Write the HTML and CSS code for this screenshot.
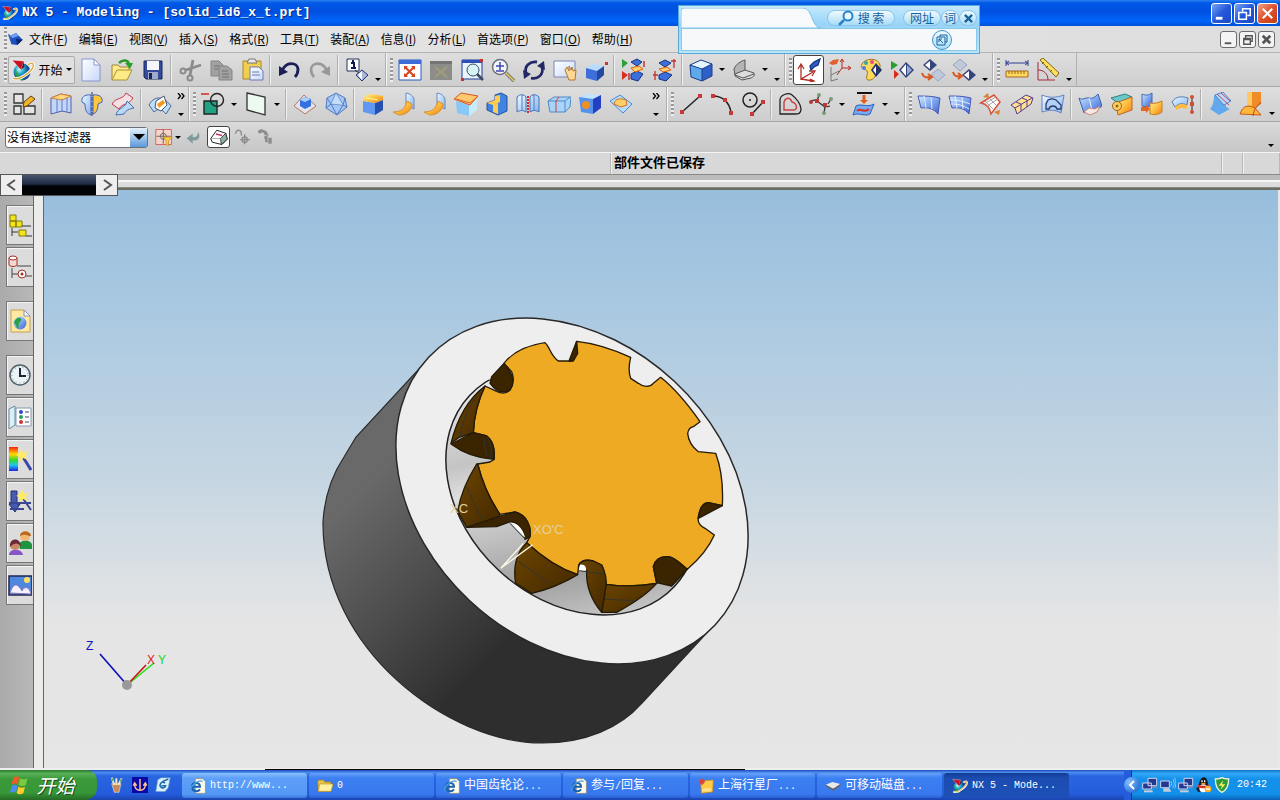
FILE: index.html
```html
<!DOCTYPE html>
<html lang="zh-CN">
<head>
<meta charset="utf-8">
<title>NX 5 - Modeling</title>
<link rel="stylesheet" href="styles.css">
</head>
<body>
<svg class="sprite" aria-hidden="true">
<defs>
<linearGradient id="gb" x1="0" y1="0" x2="1" y2="1"><stop offset="0" stop-color="#d4ecff"/><stop offset=".5" stop-color="#7fa8ee"/><stop offset="1" stop-color="#3a5fd0"/></linearGradient>
<linearGradient id="gl" x1="0" y1="0" x2="1" y2="1"><stop offset="0" stop-color="#eefaff"/><stop offset="1" stop-color="#86b4ec"/></linearGradient>
<linearGradient id="go" x1="0" y1="0" x2="1" y2="1"><stop offset="0" stop-color="#fff0a0"/><stop offset=".5" stop-color="#ffc040"/><stop offset="1" stop-color="#ee7a18"/></linearGradient>
<linearGradient id="gp" x1="0" y1="0" x2="1" y2="1"><stop offset="0" stop-color="#fff"/><stop offset="1" stop-color="#c8d8fa"/></linearGradient>
<linearGradient id="gs" x1="0" y1="0" x2="0" y2="1"><stop offset="0" stop-color="#ff2010"/><stop offset=".3" stop-color="#ffd800"/><stop offset=".55" stop-color="#30d830"/><stop offset=".75" stop-color="#20c8f0"/><stop offset="1" stop-color="#2020e0"/></linearGradient>
<radialGradient id="gg" cx=".35" cy=".35"><stop offset="0" stop-color="#c8f4ff"/><stop offset=".5" stop-color="#28b0c8"/><stop offset="1" stop-color="#104898"/></radialGradient>
</defs>
<symbol id="nx" viewBox="0 0 24 24"><circle cx="11" cy="14" r="8.500" fill="url(#gg)"/><path d="M4 10c2 4 4 10 9 12-6 1-10-4-9-12z" fill="#2ba446"/><path d="M1 2l12 1-3 9z" fill="#c81020" stroke="#fff" stroke-width=".5"/><path d="M13 3l-3 9 3-3z" fill="#700818"/><path d="M2 20c3 2 9 0 14-4s7-8 6-10-4 0-5 1" fill="none" stroke="#fff" stroke-width="3"/><path d="M2 20c3 2 9 0 14-4s7-8 6-10-4 0-5 1" fill="none" stroke="#d8a838" stroke-width="1.400"/></symbol>
<symbol id="part" viewBox="0 0 24 24"><path d="M3 7l9-4 4 4 6 6-8 8-9-1z" fill="#1c4fc0"/><path d="M3 7l9-4 4 4-9 4z" fill="#6fa0f0"/><path d="M12 12l10 1-8 8z" fill="#0c2468"/><path d="M1 5l5 14" stroke="#2458b8" stroke-width="2"/></symbol>
<symbol id="new" viewBox="0 0 24 24"><path d="M3 1h12l6 6v16H3z" fill="url(#gp)" stroke="#8497cf"/><path d="M15 1v6h6z" fill="#fff" stroke="#8497cf"/></symbol>
<symbol id="open" viewBox="0 0 24 24"><path d="M2 22V7h6l2 2h9v5" fill="#ffe98a" stroke="#a08838"/><path d="M2 22l5-10h15l-5 10z" fill="#ffec84" stroke="#a89038"/><path d="M9 5c4-4 9-3 10 1" fill="none" stroke="#2a9a2a" stroke-width="2.500"/><path d="M15 5h8l-3 6z" fill="#28a028"/></symbol>
<symbol id="save" viewBox="0 0 24 24"><path d="M3 3h18v18H5l-2-2z" fill="#354b9c" stroke="#152458"/><path d="M6 3h12v9H6z" fill="#f4f6fb"/><path d="M7 14h10v7H7z" fill="#a0abc8"/><path d="M8 15h3v6H8z" fill="#17255c"/></symbol>
<symbol id="cut" viewBox="0 0 24 24" fill="none" stroke="#8b8b8b" stroke-width="2"><circle cx="5" cy="13" r="2.500"/><circle cx="12" cy="20" r="2.500"/><path d="M8 12l15-5M12 17l3-15" stroke-width="2.800"/></symbol>
<symbol id="copy" viewBox="0 0 24 24" fill="#a2a2a2" stroke="#848484"><path d="M2 3h8l4 4v11H2z"/><path d="M10 8h8l5 4v10H10z"/><path d="M13 13h6M13 16h7M13 19h7M5 8h5M5 11h4" stroke="#707070"/></symbol>
<symbol id="paste" viewBox="0 0 24 24"><path d="M3 3h18v18H3z" fill="#f0ce50" stroke="#a88824"/><path d="M7 5h10l-2-4H9z" fill="#e8e8f0" stroke="#777"/><path d="M10 9h9l4 4v9H10z" fill="url(#gp)" stroke="#6a7cb4"/><path d="M12 14h7M12 17h8" stroke="#6579b8"/></symbol>
<symbol id="undo" viewBox="0 0 24 24"><path d="M5 13C9 3 20 4 21 11c0 3-1 6-3 8" fill="none" stroke="#1b1e58" stroke-width="2.800"/><path d="M2 8v10l9-4z" fill="#1b1e58"/></symbol>
<symbol id="redo" viewBox="0 0 24 24"><path d="M19 13C15 3 4 4 3 11c0 3 1 6 3 8" fill="none" stroke="#989898" stroke-width="2.600"/><path d="M22 8v10l-9-4z" fill="#989898"/></symbol>
<symbol id="info" viewBox="0 0 24 24"><path d="M2 1h12v12H2z" fill="#fff" stroke="#24305c"/><path d="M6 5h3v5M6 10h5M7 3h2" stroke="#111a50" stroke-width="2" fill="none"/><path d="M10 12l5 4" stroke="#222"/><path d="M17 12l6 5-6 6-6-6z" fill="#aab8de" stroke="#27356e"/><path d="M17 13v9l-4-5z" fill="#fff"/></symbol>
<symbol id="fit" viewBox="0 0 24 24"><path d="M1 2h22v20H1z" fill="#fff" stroke="#2b59c0"/><path d="M1 2h22v4H1z" fill="#3b6cd8"/><path d="M7 9l9 9M16 9l-9 9" stroke="#d84420" stroke-width="2"/><path d="M6 8h4l-4 4zM17 8h-4l4 4zM6 19h4l-4-4zM17 19h-4l4-4z" fill="#d84420"/></symbol>
<symbol id="fitgrey" viewBox="0 0 24 24"><path d="M1 3h22v19H1z" fill="#8c8c88"/><path d="M1 3h22v3H1z" fill="#747474"/><path d="M6 9l12 10M18 9L6 19" stroke="#a49c7c" stroke-width="2"/></symbol>
<symbol id="zoomwin" viewBox="0 0 24 24"><path d="M2 2h20v19H2z" fill="#eaf4fc" stroke="#1f3a98"/><path d="M2 2h20v3H2z" fill="#2c50b8"/><circle cx="13" cy="12" r="6" fill="#d8f2f4" stroke="#35506a"/><path d="M17 16l6 6" stroke="#404a60" stroke-width="2.500"/><path d="M1 20h3v3H1zM20 1h3v3h-3z" fill="#c83030"/></symbol>
<symbol id="zoom" viewBox="0 0 24 24"><circle cx="9" cy="9" r="7.500" fill="#f0f4fa" stroke="#6b6f78" stroke-width="1.500"/><path d="M5 8h8M9 4v8M5 13h8" stroke="#4048b0" stroke-width="1.500"/><path d="M15 15l8 8" stroke="#777" stroke-width="3.500"/><path d="M15 15l8 8" stroke="#f0d058" stroke-width="1.500"/></symbol>
<symbol id="rotate" viewBox="0 0 24 24"><path d="M4 15C2 8 8 3 15 4M20 9c2 7-4 13-11 11" fill="none" stroke="#222866" stroke-width="2.800"/><path d="M1 12l8 4-7 5zM23 12l-8-4 7-5z" fill="#222866"/></symbol>
<symbol id="pan" viewBox="0 0 24 24"><path d="M1 3h21v16H1z" fill="url(#gp)" stroke="#7c86b0"/><path d="M12 12l2-3 2 4V8l2 4 1-3 1 4 3-1-1 10h-6z" fill="#ffd898" stroke="#b07830"/></symbol>
<symbol id="persp" viewBox="0 0 24 24"><path d="M2 10l7-4 11 2-7 5z" fill="#b8dcff"/><path d="M2 10l11 3v10L2 20z" fill="#3d6fdc"/><path d="M13 13l7-5v9l-7 6z" fill="#2448a0"/><path d="M21 4h3v3h-3z" fill="#d03030"/></symbol>
<symbol id="clipa" viewBox="0 0 24 24"><path d="M1 1l6 4-6 5z" fill="#2f9f38"/><path d="M1 13l6 4-6 5z" fill="#d83020"/><path d="M10 4l6-3 5 3-5 4zM10 16l6-3 6 3-5 7-7-2z" fill="#3d6fdc" stroke="#17347c"/><path d="M10 10l8-2 4 3-8 3z" fill="#ffd070" stroke="#e06010"/><path d="M23 3v6M8 15v7" stroke="#c83030" stroke-width="1.500"/></symbol>
<symbol id="clipb" viewBox="0 0 24 24"><path d="M7 5l6-3 6 3-6 4zM7 17l6-3 7 3-6 6-7-2z" fill="#3d6fdc" stroke="#17347c"/><path d="M7 11l8-2 4 3-8 2z" fill="#ffd070" stroke="#e06010"/><path d="M22 1v9M19 3h5M3 13v9M1 17h5" stroke="#c83030" stroke-width="1.300"/></symbol>
<symbol id="cube" viewBox="0 0 24 24"><path d="M1 7l11-5 11 4-10 5z" fill="#e6f7ff"/><path d="M1 7l12 4v12L2 19z" fill="#60a8ec"/><path d="M13 11l10-5v12l-10 5z" fill="#2e60c8"/><path d="M1 7l11-5 11 4v12l-10 5L2 19zM1 7l12 4 10-5M13 11v12" fill="none" stroke="#1b3c8c"/></symbol>
<symbol id="grey" viewBox="0 0 24 24" fill="#b4b4b4" stroke="#555"><path d="M2 11c2-5 7-8 11-9v11L3 17z"/><path d="M3 16l10-4 9 3c1 3-1 4-3 5l-9 2-7-4z" fill="#ddd"/><path d="M3 17l8 3 11-4" fill="none"/></symbol>
<symbol id="csysa" viewBox="0 0 24 24" fill="none" stroke="#b03028" stroke-width="1.300"><path d="M4 8v13l12-7M4 21l12 2M1 11l3-5 3 5M12 13l6 0-3 5M13 21l4 2-4 1"/><path d="M13 8l4-4 6-3-2 6-4 2-3 3z" fill="#2f5fc8" stroke="#14347c"/></symbol>
<symbol id="csysb" viewBox="0 0 24 24" fill="none" stroke="#b82820"><path d="M14 2v8l8 0M14 10l-5 7M12 4l2-3 2 3M20 8l3 2-3 2"/><path d="M3 9v14M3 17l8-4M3 23l7-2" stroke="#777"/><path d="M1 5l4-3 6-1-2 5-5 1z" fill="#e06030" stroke="none"/></symbol>
<symbol id="palette" viewBox="0 0 24 24"><path d="M3 6C6 0 19-1 21 7c1 4-4 4-4 8s-4 8-8 7 2-8-2-10-6-1-4-6z" fill="#ffd95c" stroke="#a07820"/><circle cx="7" cy="5" r="2" fill="#30a8a8"/><circle cx="13" cy="4" r="2" fill="#e05080"/><circle cx="5" cy="10" r="2" fill="#5080d8"/><path d="M17 5l6 7-6 7-5-7z" fill="#25326c"/><path d="M17 8v8l-3-4z" fill="#fff"/></symbol>
<symbol id="visa" viewBox="0 0 24 24"><path d="M1 3l7 4-7 5z" fill="#28a030"/><path d="M4 12l5 4-5 5z" fill="#d82818"/><path d="M16 4l8 8-8 8-7-8z" fill="#34457c"/><path d="M16 6v12l-5-6z" fill="#fff"/><path d="M17 7l5 5-5 5z" fill="#96a8d8"/></symbol>
<symbol id="visb" viewBox="0 0 24 24"><path d="M9 1l7 6-7 6-7-6z" fill="#34457c"/><path d="M9 3v8L4 7z" fill="#fff"/><path d="M17 11l7 6-7 6-7-6z" fill="#c0c8dc" stroke="#9aa4c0"/><path d="M1 15c1 4 4 5 8 4M7 16l4 3-4 3" fill="none" stroke="#d85820" stroke-width="2"/></symbol>
<symbol id="visc" viewBox="0 0 24 24"><path d="M8 1l7 6-7 6-7-6z" fill="#c0c8dc" stroke="#9aa4c0"/><path d="M17 11l7 6-7 6-7-6z" fill="#34457c"/><path d="M17 13v8l-5-4z" fill="#fff"/><path d="M1 14c1 4 4 5 7 4M6 15l4 3-4 3" fill="none" stroke="#d85820" stroke-width="2"/></symbol>
<symbol id="ruler" viewBox="0 0 24 24"><path d="M1 5h22M1 2v6M23 2v6M4 3L1 5l3 2M20 3l3 2-3 2" stroke="#303c90" fill="none"/><path d="M1 13h22v6H1z" fill="#ffd860" stroke="#a86820"/><path d="M4 13v3M7 13v3M10 13v3M13 13v3M16 13v3M19 13v3" stroke="#a06010"/></symbol>
<symbol id="angle" viewBox="0 0 24 24"><path d="M2 4v18h17M2 12c6 0 10 4 10 10" fill="none" stroke="#a82838"/><path d="M4 2l3-2 16 15-3 4z" fill="#ffe058" stroke="#786020"/><path d="M8 4l-2 2M12 8l-2 2M16 12l-2 2" stroke="#786020"/></symbol>
<symbol id="sketch" viewBox="0 0 24 24"><path d="M2 2h9v9H2zM2 14h7v8H2zM12 14h11v8H12z" fill="#e4e4e4" stroke="#333" stroke-width="1.300"/><path d="M11 15l1-5 7-6 4 3-8 7z" fill="#f0b428" stroke="#664010"/></symbol>
<symbol id="extr" viewBox="0 0 24 24"><path d="M2 6v16l11-3 9 2V4L12 2z" fill="#c2d6f8" stroke="#5060a8"/><path d="M2 6l10-4 10 2-9 4z" fill="#ffd880" stroke="#d8802c"/><path d="M8 7v13M13 7v13M18 6v14" stroke="#6878c8"/></symbol>
<symbol id="revolve" viewBox="0 0 24 24"><path d="M11 3C4 2 1 6 2 10l3 2c0 6 2 10 6 11z" fill="url(#gl)" stroke="#4460b8"/><path d="M13 3c7-1 10 3 9 7l-4 2c0 6-2 9-5 10z" fill="#ffc83c" stroke="#4460b8"/><path d="M12 0v24" stroke="#223880" stroke-dasharray="4 1"/></symbol>
<symbol id="sweep" viewBox="0 0 24 24"><path d="M1 12C5 5 12 8 15 1l7 5c-4 7-11 5-14 11z" fill="#f4e0e4" stroke="#c03848"/><path d="M5 23c2-8 10-7 11-14l7 7c-5 1-8 2-10 6z" fill="#bcdaf8" stroke="#4070b0"/></symbol>
<symbol id="patch" viewBox="0 0 24 24"><path d="M1 13C5 5 14 2 23 14l-5 8c-4-5-8-6-12-2z" fill="#bedcf8" stroke="#4868a0"/><path d="M8 9l8-5 3 9-6 6-6-3z" fill="#fff" stroke="#456"/><path d="M9 12l6-4 2 3-6 5z" fill="#f09820"/></symbol>
<symbol id="bool" viewBox="0 0 24 24"><path d="M3 9h13v13H3z" fill="#1fa384" stroke="#222" stroke-width="1.400"/><circle cx="16" cy="8" r="6.500" fill="none" stroke="#222" stroke-width="1.400"/><path d="M0 2h8" stroke="#d02828" stroke-width="1.500"/></symbol>
<symbol id="plane" viewBox="0 0 24 24"><path d="M3 1l18 4v18L3 18z" fill="#edfaf0" stroke="#333" stroke-width="1.300"/></symbol>
<symbol id="pyr" viewBox="0 0 24 24"><path d="M1 14L11 3l12 11-11 8z" fill="#dfe4ee" stroke="#b87860"/><path d="M7 8l5-3 6 2v7l-6 3-5-3z" fill="#3470e0"/><path d="M7 8l5-3 6 2-6 3z" fill="#a8d0ff"/></symbol>
<symbol id="poly" viewBox="0 0 24 24"><path d="M12 1l9 5 2 9-10 8L2 16 3 6z" fill="#a4c8f4" stroke="#5478c0"/><path d="M12 1L7 12l6 11 6-10zM3 6l4 6 12 1 2-7M2 16l5-4M23 15l-4-2" fill="none" stroke="#5478c0"/><path d="M12 1L7 12l12 1z" fill="#d8ecff" opacity=".6"/></symbol>
<symbol id="blend" viewBox="0 0 24 24"><path d="M2 9l12 2v12L2 20z" fill="#5e98f0"/><path d="M14 11l8-3v10l-8 5z" fill="#2450b0"/><path d="M2 9c0-5 4-7 8-7l12 2v4l-8 3z" fill="url(#go)"/><path d="M5 6l12 2" stroke="#fff8a0"/></symbol>
<symbol id="curve1" viewBox="0 0 24 24"><path d="M14 1c5 1 7 3 8 6v10c-4-2-6-3-8-3z" fill="url(#gl)" stroke="#6888c0"/><path d="M1 20c8 0 12-3 14-11l5 3c0 6-6 11-13 11z" fill="url(#go)" stroke="#d89028"/></symbol>
<symbol id="chamfer" viewBox="0 0 24 24"><path d="M2 9l13 4v11L3 21z" fill="#88c8f8"/><path d="M15 13l8-9v14l-8 6z" fill="#c8ecfc"/><path d="M0 7l7-6 17 3-8 9z" fill="#ffc870" stroke="#d05820"/><path d="M2 7l14 4 7-6" stroke="#e06020" fill="none"/></symbol>
<symbol id="shell" viewBox="0 0 24 24"><path d="M2 11l8-3V3l6-2 6 3v15l-9 4-11-5z" fill="#3f84e0" stroke="#2850a0"/><path d="M2 11l6 2 7-3V3l-5 1v4zM8 13v7l5 2V11z" fill="#ffcb50"/></symbol>
<symbol id="rib" viewBox="0 0 24 24"><path d="M1 5c3-3 7-3 9 0v15c-3-2-6-2-9 0zM14 5c2-3 6-3 9 0v15c-3-2-6-2-9 0z" fill="url(#gl)" stroke="#4470b8"/><path d="M12 4v18" stroke="#d82828" stroke-width="2" stroke-dasharray="2 1"/><path d="M6 3v16M18 3v16" stroke="#507ac0"/></symbol>
<symbol id="trim" viewBox="0 0 24 24"><path d="M1 9l6-4h17l-1 10-5 5H3z" fill="#a8d4f8" stroke="#5088c8"/><path d="M1 9h17l5-4M18 9v11" fill="none" stroke="#5088c8"/><path d="M12 5l-3 4v11" fill="none" stroke="#d04038"/></symbol>
<symbol id="hole" viewBox="0 0 24 24"><path d="M1 5l8-3 14 1-8 4z" fill="#c0e4ff"/><path d="M1 5l14 2v15L3 20z" fill="#5494ec"/><path d="M15 7l8-4v13l-8 6z" fill="#2340c0"/><circle cx="8" cy="13" r="4" fill="#f09020"/></symbol>
<symbol id="emboss" viewBox="0 0 24 24"><path d="M1 9l10-6 12 9-9 9z" fill="#b8ddf8" stroke="#4888d0"/><path d="M5 12c1-6 7-6 12-4l1 5-6 2z" fill="#ffcf68" stroke="#d07020"/></symbol>
<symbol id="line" viewBox="0 0 24 24"><path d="M3 20L21 4" stroke="#222" stroke-width="1.500"/><path d="M1 18h4v4H1zM19 2h4v4h-4z" fill="#c83838"/></symbol>
<symbol id="arc" viewBox="0 0 24 24"><path d="M3 4c9 0 17 6 18 17" fill="none" stroke="#222" stroke-width="1.500"/><path d="M1 2h4v4H1zM13 6h4v4h-4zM19 19h4v4h-4z" fill="#c83838"/></symbol>
<symbol id="circ" viewBox="0 0 24 24"><circle cx="9" cy="8" r="7" fill="none" stroke="#222" stroke-width="1.500"/><path d="M8 8h2M11 22L22 10" stroke="#222" stroke-width="1.500"/><path d="M9 20h4v4H9zM20 8h4v4h-4z" fill="#c83838"/></symbol>
<symbol id="offset" viewBox="0 0 24 24" fill="none"><path d="M2 22V8c0-5 8-8 12-5s9 9 9 14-3 5-6 5z" stroke="#222" stroke-width="1.300"/><path d="M6 18V10c2-5 6-5 8 0 5 1 6 8 2 8z" stroke="#c84848" stroke-width="1.500"/></symbol>
<symbol id="spline" viewBox="0 0 24 24"><path d="M1 10c7-7 11 8 20 4M8 9l2-6M16 14l-1 8M19 12l3-5" fill="none" stroke="#333" stroke-width="1.300"/><path d="M6 7h4v4H6zM14 11h4v4h-4z" fill="#b83838"/><circle cx="10" cy="3" r="2" fill="#7a9a78"/><circle cx="15" cy="21" r="2" fill="#7a9a78"/><circle cx="22" cy="7" r="2" fill="#7a9a78"/><circle cx="2" cy="10" r="2" fill="#b83838"/></symbol>
<symbol id="proj" viewBox="0 0 24 24"><path d="M5 1h15" stroke="#111" stroke-width="2"/><path d="M12 3v7" stroke="#e06020" stroke-width="3"/><path d="M8 8h8l-4 4z" fill="#e06020"/><path d="M4 14c5-3 11 2 18-2l-4 10c-5 3-11-2-17 1z" fill="#78acf0" stroke="#2860c0"/><path d="M5 19c4-4 7 3 12-2" fill="none" stroke="#d83028" stroke-width="2"/></symbol>
<symbol id="surfa" viewBox="0 0 24 24"><path d="M1 4c7 0 14 0 22 2l-2 16c-4-5-9-7-17-6z" fill="url(#gb)" stroke="#4858b8"/><path d="M7 4l2 12M14 5l1 12" stroke="#dceaff"/></symbol>
<symbol id="surfb" viewBox="0 0 24 24"><path d="M1 4c7 0 14 0 22 2l-2 16c-4-5-9-7-17-6z" fill="url(#gb)" stroke="#4858b8"/><path d="M7 4l2 12M14 5l1 12M2 8c7 0 13 1 20 4M3 12c6 0 12 1 18 5" stroke="#e8f0ff" fill="none"/></symbol>
<symbol id="surfc" viewBox="0 0 24 24"><path d="M2 11L15 3l6 7-9 12c-1-6-4-10-10-11z" fill="#fff" stroke="#d85038" stroke-width="1.500"/><path d="M6 9l9 9M10 6l8 8M8 14L19 7M5 12L17 5" stroke="#a8a0a0"/><path d="M4 5l5-4 1 5zM15 20l6-2-1 5z" fill="#d88030"/></symbol>
<symbol id="surfd" viewBox="0 0 24 24"><path d="M1 13l15-10 7 3-2 6L7 22l-2-6z" fill="#ffe290" stroke="#5b388c"/><path d="M5 16L22 6M6 10l5 2v7M12 6l5 2v7" stroke="#5b388c" fill="none"/></symbol>
<symbol id="surfe" viewBox="0 0 24 24"><path d="M1 3c7 3 14 3 22 0l-3 18c-7-4-12-3-19-1z" fill="url(#gl)" stroke="#6480c8"/><path d="M7 8c4-2 8-1 10 2l3 3v4h-4c-1-4-7-4-8 0H5v-5z" fill="#b4d0f4" stroke="#273e78" stroke-width="1.300"/></symbol>
<symbol id="surff" viewBox="0 0 24 24"><path d="M1 6c4 3 6-1 10 0s6-1 9-4l4 12c-4 4-8 2-11 4s-5 1-7 3z" fill="url(#gb)" stroke="#3c60b0"/><path d="M11 6l3 12" stroke="#e8f4ff"/><path d="M6 20l5-4 6 1 5-3-3 6-7 3z" fill="#f8e8e4" stroke="#c88878"/></symbol>
<symbol id="surfg" viewBox="0 0 24 24"><path d="M2 6l14-4 7 3-14 6z" fill="#6bc8c8" stroke="#308080"/><path d="M7 11l16-6v13l-14 5z" fill="url(#go)" stroke="#b86828"/><circle cx="8" cy="14" r="4.500" fill="#ffcc60" stroke="#986020"/><circle cx="8" cy="14" r="1.500" fill="#887018"/></symbol>
<symbol id="surfh" viewBox="0 0 24 24"><path d="M2 2c4 2 7 1 10-1v12c-3 2-6 2-10 1z" fill="url(#gb)" stroke="#4468b0"/><path d="M10 11c4 1 8 0 12-2v11c-4 3-8 3-12 2z" fill="url(#go)" stroke="#c88028"/><path d="M1 15h5v-2l4 4-4 4v-2H1z" fill="#e06820"/></symbol>
<symbol id="surfi" viewBox="0 0 24 24"><path d="M1 10c4-6 10-6 16-4l-1 7c-5-2-8-2-12 2z" fill="url(#gl)" stroke="#5080b0"/><path d="M4 15c3-3 6-4 12-2v4c-6-2-8-1-11 1z" fill="#ffb840"/><path d="M21 4v17" stroke="#222"/><circle cx="21" cy="5" r="2" fill="#d05030"/><circle cx="21" cy="20" r="2" fill="#d05030"/><path d="M19 10h4v4h-4z" fill="#d05030"/></symbol>
<symbol id="surfj" viewBox="0 0 24 24"><path d="M2 17c3-3 4-8 4-14l12 5c-1 6 0 8 4 9l-11 6z" fill="#62a8ec"/><path d="M7 3l8-3 8 9-7 4z" fill="#b4dcfa" stroke="#6080c8"/><path d="M9 2l12 11M13 1l9 8" stroke="#c84060"/></symbol>
<symbol id="surfk" viewBox="0 0 24 24"><path d="M8 0h14v12l-6 4-8-3z" fill="#f08c28"/><path d="M8 0h5v14l-5-1z" fill="#ffc860"/><path d="M1 22c3-9 8-9 15-6l6 7z" fill="#ffb838" stroke="#c85820"/><path d="M22 10c-4 5-7 6-8 14" fill="none" stroke="#b83c20"/></symbol>
<symbol id="filt" viewBox="0 0 24 24"><path d="M1 2h21v20H1z" fill="#f4d4c8" stroke="#d04848"/><path d="M11 2v19M2 11h19" stroke="#444"/><circle cx="11" cy="11" r="4" fill="none" stroke="#555"/><path d="M11 12h12l-5 5v7l-3-2v-5z" fill="#ffd23c" stroke="#c88820"/></symbol>
<symbol id="back" viewBox="0 0 24 24"><path d="M18 4c6 10-2 14-8 13v5l-9-8 9-7v5c4 1 8-1 8-8z" fill="#7f9a9a"/></symbol>
<symbol id="solid" viewBox="0 0 24 24"><path d="M1 14L9 3l12 4 2 8-7 7-13-3z" fill="#fff" stroke="#222" stroke-width="1.300"/><path d="M15 22l-1-8 7-7 2 8z" fill="#8cb0ac" stroke="#222"/><path d="M1 14l13 0" stroke="#999"/><path d="M8 8l8 2" stroke="#d83070" stroke-width="2"/></symbol>
<symbol id="ga" viewBox="0 0 24 24" fill="none" stroke="#8d8d8d" stroke-width="2"><path d="M2 7c3-8 10-6 9 3M16 8v15M9 16h15"/><circle cx="16" cy="16" r="4"/></symbol>
<symbol id="gbk" viewBox="0 0 24 24" fill="#8d8d8d"><path d="M1 3l5-3 8 3 4 7-6-1-3-4-6 2zM11 10h5v5h-5zM17 13h5v9h-5zM12 15h4v5h-4z"/></symbol>
<symbol id="nav" viewBox="0 0 24 24"><path d="M2 2h6v6H2zM2 8h6v6H2zM8 8h6v6H8z" fill="#f4e418" stroke="#807810"/><path d="M14 13h9M4 15v8M4 19h6M18 23h6" stroke="#333"/><path d="M11 17h7v6h-7z" fill="#f4e418" stroke="#807810"/></symbol>
<symbol id="nav2" viewBox="0 0 24 24"><path d="M1 3v7c2 2 6 2 8 0V3" fill="#f4d8d0" stroke="#a03028"/><ellipse cx="5" cy="3" rx="4" ry="2" fill="#fff" stroke="#a03028"/><path d="M9 11h14M4 13v10M4 19h6M18 21h6" stroke="#444"/><circle cx="14" cy="19" r="4" fill="#fff" stroke="#a03028"/><circle cx="14" cy="19" r="1.500" fill="#a03028"/></symbol>
<symbol id="web" viewBox="0 0 24 24"><path d="M3 1h13l6 6v16H3z" fill="#ffe9a0" stroke="#c8a050"/><path d="M16 1v6h6z" fill="#fff" stroke="#8090b8"/><circle cx="12" cy="14" r="6.500" fill="url(#gb)"/><path d="M8 10c4-3 7 0 4 3s0 5-2 6-1-3-3-4 0-4 1-5z" fill="#28a048"/></symbol>
<symbol id="clock" viewBox="0 0 24 24"><circle cx="12" cy="12" r="10" fill="#eaf4f6" stroke="#51626c" stroke-width="1.500"/><circle cx="12" cy="12" r="8" fill="none" stroke="#7a8c94" stroke-dasharray="1 3"/><path d="M12 5v8h6" fill="none" stroke="#223" stroke-width="2"/></symbol>
<symbol id="roles" viewBox="0 0 24 24"><path d="M8 3h15v18H8z" fill="#fff" stroke="#8898b8"/><path d="M1 4l6-3v19l-6 4z" fill="#d8f0f8" stroke="#708898"/><circle cx="13" cy="7" r="2" fill="#3048d0"/><circle cx="13" cy="12" r="2" fill="#28a058"/><circle cx="13" cy="17" r="2" fill="#d83030"/><path d="M17 7h4M17 12h4M17 17h4" stroke="#445"/></symbol>
<symbol id="spect" viewBox="0 0 24 24"><path d="M1 0h9v24H1z" fill="url(#gs)"/><path d="M15 10l8 13" stroke="#3c48a8" stroke-width="3"/><path d="M13 1l2 5 5-2-3 5 3 4-5-2-3 4v-5l-4-2 4-2z" fill="#ffec60"/></symbol>
<symbol id="wand" viewBox="0 0 24 24"><path d="M3 2h6v13h3l-5 8-6-8h2z" fill="#475bb0" stroke="#26306c"/><path d="M1 14h22M2 20h14M14 8l9 13" stroke="#3a4690" stroke-width="2"/><path d="M14 0l2 5 5-1-4 4 3 4-5-2-3 3v-5l-4-1 4-2z" fill="#ffec60"/></symbol>
<symbol id="people" viewBox="0 0 24 24"><path d="M11 14c1-6 12-6 13 0v4H12z" fill="#1c9440"/><circle cx="17" cy="5" r="5" fill="#f0b870"/><path d="M12 5c0-6 11-6 11 0-3 0-6-3-11 0z" fill="#b86820"/><path d="M1 24c0-7 13-7 14 0z" fill="#8854c8"/><circle cx="7" cy="14" r="5" fill="#c88868"/><path d="M2 16c-1-10 11-10 11 0-2-4-6-5-11 0z" fill="#6c2838"/></symbol>
<symbol id="pic" viewBox="0 0 24 24"><path d="M1 3h23v19H1z" fill="#5088e0" stroke="#222850" stroke-width="1.500"/><path d="M2 20c2-6 4-8 6-8s5 4 6 6c2-5 7-5 9 3z" fill="#f6f0ff" stroke="#8878b8"/><circle cx="19" cy="7" r="3" fill="#ffe060"/></symbol>
<symbol id="winflag" viewBox="0 0 24 24"><path d="M4 3c3-2 5-1 7 0l-2 8c-2-1-4-1-7 0z" fill="#f05a28"/><path d="M12 4c3 1 5 2 9 0l-2 8c-3 2-6 1-9 0z" fill="#7cc840"/><path d="M2 13c3-2 5-1 7 0l-2 8c-2-1-4-1-7 0z" fill="#4a8cf0"/><path d="M10 14c3 1 5 2 8 0l-2 8c-3 2-6 1-8 0z" fill="#ffcc28"/></symbol>
<symbol id="brushes" viewBox="0 0 24 24"><path d="M4 10h14l-3 13H8z" fill="#c88a58" stroke="#fff" stroke-width=".7"/><path d="M8 12L4 1M11 12V2M14 12l5-10" stroke="#f0e8c0" stroke-width="3"/><path d="M4 2l2 4M19 3l-2 4" stroke="#40a050" stroke-width="2"/></symbol>
<symbol id="anchor" viewBox="0 0 24 24"><path d="M0 0h24v24H0z" fill="#0808a8"/><path d="M12 3v17M4 11c0 7 4 9 8 9s8-2 8-9M2 13l2-4 3 4M17 13l3-4 2 4" fill="none" stroke="#ffc090" stroke-width="2.200"/></symbol>
<symbol id="desk" viewBox="0 0 24 24"><path d="M4 4l5-3h14l-3 15-5 6H1z" fill="#d8f0fc" stroke="#5088b8"/><path d="M15 9c-6-4-10 4-5 7 3 1 6-1 6-3h-6M11 7l9-4" fill="none" stroke="#216ca4" stroke-width="2.300"/></symbol>
<symbol id="ie" viewBox="0 0 24 24"><path d="M8 1h11l4 4v18H8z" fill="#fffceb" stroke="#908870"/><path d="M15 17c-4 5-12 3-12-4s12-8 12 0H5" fill="none" stroke="#1761ad" stroke-width="3"/><path d="M1 19C1 11 12 2 19 5" fill="none" stroke="#45a0e0" stroke-width="2"/></symbol>
<symbol id="folder" viewBox="0 0 24 24"><path d="M1 5l2-2h7l2 3h9v14H2z" fill="#e8c048" stroke="#a07818"/><path d="M2 20l2-11h20l-3 11z" fill="#fff0a0" stroke="#c09828"/></symbol>
<symbol id="note" viewBox="0 0 24 24"><path d="M4 4l19-1-1 18-17 2z" fill="#ffcb48" stroke="#c08020"/><path d="M7 16l12-1v5H6z" fill="#ffe490"/><path d="M1 3l6-2 4 4-4 5-5-1z" fill="#d84840"/></symbol>
<symbol id="disk" viewBox="0 0 24 24"><path d="M1 10l10-4 12 3-6 6-5 1z" fill="#e8e8e8"/><path d="M1 10l11 6v3L2 13zM12 16l11-7v3l-11 7z" fill="#666"/></symbol>
<symbol id="net" viewBox="0 0 24 24"><path d="M9 2h13v11H9zM1 9h13v9H1z" fill="#253890" stroke="#d0d4e8" stroke-width="1.500"/><path d="M3 20h13v3H3z" fill="#c8ccd8"/><path d="M14 14h8v3h-6z" fill="#888cac"/></symbol>
<symbol id="wifi" viewBox="0 0 24 24"><path d="M1 6h13v10H1z" fill="#253890" stroke="#d0d4e8" stroke-width="1.500"/><path d="M5 17h9l3 5H5z" fill="#c8ccd8"/><path d="M16 6c2 2 2 5 0 8M19 3c3 4 3 9 0 13M22 1c3 6 2 12 0 16" fill="none" stroke="#c0e4ff"/></symbol>
<symbol id="qq" viewBox="0 0 24 24"><path d="M4 15C5-4 18-4 18 12l4 6-4 4H3l-3-5z" fill="#16161c"/><ellipse cx="11" cy="17" rx="6" ry="6" fill="#fff"/><path d="M3 11c5 3 12 3 16 0v4c-5 3-12 2-16 0z" fill="#d83020"/><path d="M8 5h2v3H8zM12 5h2v3h-2z" fill="#fff"/><path d="M7 9h8l-4 3z" fill="#f0a820"/><circle cx="18" cy="18" r="5" fill="#ffb030"/><path d="M15 18h6" stroke="#fff" stroke-width="2"/></symbol>
<symbol id="shield" viewBox="0 0 24 24"><path d="M12 1c3 2 6 2 10 2 0 10-2 16-10 20C4 19 2 13 2 3c4 0 7 0 10-2z" fill="#2e9a38" stroke="#e8f4d8" stroke-width="2"/><path d="M14 5l-7 8h5l-2 6 7-8h-5z" fill="#fff060"/></symbol>
</svg>

<header class="titlebar">
  <svg class="icon-sm"><use href="#nx"/></svg>
  <h1 class="title">NX 5 - Modeling - [solid_id6_x_t.prt]</h1>
  <div class="win-buttons">
    <button class="win-btn" aria-label="最小化"><svg viewBox="0 0 20 20"><path d="M4 15h7" stroke-width="3"/></svg></button>
    <button class="win-btn" aria-label="还原"><svg viewBox="0 0 20 20"><path d="M8 8V5h8v7h-3M4 9h8v7H4zM4 9h8" stroke-width="1.600"/></svg></button>
    <button class="win-btn win-close" aria-label="关闭"><svg viewBox="0 0 20 20"><path d="M5 5l10 10M15 5L5 15" stroke-width="2.200"/></svg></button>
  </div>
</header>

<nav class="menubar">
  <span class="grip"></span>
  <svg class="icon-sm"><use href="#part"/></svg>
  <div class="menus">
    <button class="menu">文件(<u>F</u>)</button><button class="menu">编辑(<u>E</u>)</button><button class="menu">视图(<u>V</u>)</button><button class="menu">插入(<u>S</u>)</button><button class="menu">格式(<u>R</u>)</button><button class="menu">工具(<u>T</u>)</button><button class="menu">装配(<u>A</u>)</button><button class="menu">信息(<u>I</u>)</button><button class="menu">分析(<u>L</u>)</button><button class="menu">首选项(<u>P</u>)</button><button class="menu">窗口(<u>O</u>)</button><button class="menu">帮助(<u>H</u>)</button>
  </div>
  <div class="mdi-buttons">
    <button class="mdi-btn" aria-label="最小化窗口"><svg viewBox="0 0 16 16"><path d="M4 12h7" stroke-width="2"/></svg></button>
    <button class="mdi-btn" aria-label="还原窗口"><svg viewBox="0 0 16 16"><path d="M6 6V4h7v6h-2M4 7h7v6H4zM4 8h7" stroke-width="1.500"/></svg></button>
    <button class="mdi-btn" aria-label="关闭窗口"><svg viewBox="0 0 16 16"><path d="M4 4l8 8M12 4l-8 8" stroke-width="3"/></svg></button>
  </div>
</nav>

<div class="toolrow toolrow-bordered">
  <div class="toolgroup"><span class="grip"></span>
    <button class="start-app"><svg class="icon"><use href="#nx"/></svg>开始<i class="caret"></i></button>
    <button class="tool" aria-label="新建"><svg class="icon"><use href="#new"/></svg></button>
    <button class="tool" aria-label="打开"><svg class="icon"><use href="#open"/></svg></button>
    <button class="tool" aria-label="保存"><svg class="icon"><use href="#save"/></svg></button>
    <span class="sep"></span>
    <button class="tool" aria-label="剪切"><svg class="icon"><use href="#cut"/></svg></button>
    <button class="tool" aria-label="复制"><svg class="icon"><use href="#copy"/></svg></button>
    <button class="tool" aria-label="粘贴"><svg class="icon"><use href="#paste"/></svg></button>
    <span class="sep"></span>
    <button class="tool" aria-label="撤消"><svg class="icon"><use href="#undo"/></svg></button>
    <button class="tool" aria-label="重做"><svg class="icon"><use href="#redo"/></svg></button>
    <span class="sep"></span>
    <button class="tool" aria-label="对象信息"><svg class="icon"><use href="#info"/></svg></button>
    <button class="drop drop-low" aria-label="选项"><i class="caret"></i></button>
  </div>
  <div class="toolgroup"><span class="grip"></span>
    <button class="tool" aria-label="适合窗口"><svg class="icon"><use href="#fit"/></svg></button>
    <button class="tool" aria-label="适合选择"><svg class="icon"><use href="#fitgrey"/></svg></button>
    <button class="tool" aria-label="缩放窗口"><svg class="icon"><use href="#zoomwin"/></svg></button>
    <button class="tool" aria-label="缩放"><svg class="icon"><use href="#zoom"/></svg></button>
    <button class="tool" aria-label="旋转"><svg class="icon"><use href="#rotate"/></svg></button>
    <button class="tool" aria-label="平移"><svg class="icon"><use href="#pan"/></svg></button>
    <button class="tool" aria-label="透视"><svg class="icon"><use href="#persp"/></svg></button>
    <span class="sep"></span>
    <button class="tool" aria-label="剖切"><svg class="icon"><use href="#clipa"/></svg></button>
    <button class="tool" aria-label="编辑剖切"><svg class="icon"><use href="#clipb"/></svg></button>
    <span class="sep"></span>
    <button class="tool" aria-label="着色"><svg class="icon"><use href="#cube"/></svg></button>
    <button class="drop" aria-label="着色选项"><i class="caret"></i></button>
    <button class="tool" aria-label="视图方向"><svg class="icon"><use href="#grey"/></svg></button>
    <button class="drop" aria-label="方向选项"><i class="caret"></i></button>
    <button class="drop drop-low" aria-label="选项"><i class="caret"></i></button>
  </div>
  <div class="toolgroup"><span class="grip"></span>
    <button class="tool tool-on" aria-label="显示 WCS"><svg class="icon"><use href="#csysa"/></svg></button>
    <button class="tool" aria-label="WCS 方向"><svg class="icon"><use href="#csysb"/></svg></button>
    <button class="tool" aria-label="编辑对象显示"><svg class="icon"><use href="#palette"/></svg></button>
    <button class="tool" aria-label="显示和隐藏"><svg class="icon"><use href="#visa"/></svg></button>
    <button class="tool" aria-label="隐藏"><svg class="icon"><use href="#visb"/></svg></button>
    <button class="tool" aria-label="显示"><svg class="icon"><use href="#visc"/></svg></button>
    <button class="drop drop-low" aria-label="选项"><i class="caret"></i></button>
  </div>
  <div class="toolgroup"><span class="grip"></span>
    <button class="tool" aria-label="测量距离"><svg class="icon"><use href="#ruler"/></svg></button>
    <button class="tool" aria-label="测量角度"><svg class="icon"><use href="#angle"/></svg></button>
    <button class="drop drop-low" aria-label="选项"><i class="caret"></i></button>
  </div>
</div>

<div class="toolrow">
  <div class="toolgroup"><span class="grip"></span>
    <button class="tool" aria-label="草图"><svg class="icon"><use href="#sketch"/></svg></button>
    <span class="sep"></span>
    <button class="tool" aria-label="拉伸"><svg class="icon"><use href="#extr"/></svg></button>
    <button class="tool" aria-label="回转"><svg class="icon"><use href="#revolve"/></svg></button>
    <button class="tool" aria-label="扫掠"><svg class="icon"><use href="#sweep"/></svg></button>
    <span class="sep"></span>
    <button class="tool" aria-label="补片"><svg class="icon"><use href="#patch"/></svg></button>
    <button class="overflow" aria-label="更多"><svg viewBox="0 0 8 7"><path d="M1 0l2.500 3L1 6M4.500 0L7 3 4.500 6"/></svg><i class="caret"></i></button>
  </div>
  <div class="toolgroup"><span class="grip"></span>
    <button class="tool" aria-label="布尔"><svg class="icon"><use href="#bool"/></svg></button>
    <button class="drop" aria-label="布尔选项"><i class="caret"></i></button>
    <button class="tool" aria-label="基准平面"><svg class="icon"><use href="#plane"/></svg></button>
    <button class="drop" aria-label="基准选项"><i class="caret"></i></button>
    <span class="sep"></span>
    <button class="tool" aria-label="抽取"><svg class="icon"><use href="#pyr"/></svg></button>
    <button class="tool" aria-label="多面体"><svg class="icon"><use href="#poly"/></svg></button>
    <span class="sep"></span>
    <button class="tool" aria-label="边倒圆"><svg class="icon"><use href="#blend"/></svg></button>
    <button class="tool" aria-label="面倒圆"><svg class="icon"><use href="#curve1"/></svg></button>
    <button class="tool" aria-label="软倒圆"><svg class="icon"><use href="#curve1"/></svg></button>
    <button class="tool" aria-label="倒斜角"><svg class="icon"><use href="#chamfer"/></svg></button>
    <button class="tool" aria-label="抽壳"><svg class="icon"><use href="#shell"/></svg></button>
    <button class="tool" aria-label="缝合"><svg class="icon"><use href="#rib"/></svg></button>
    <button class="tool" aria-label="修剪体"><svg class="icon"><use href="#trim"/></svg></button>
    <button class="tool" aria-label="孔"><svg class="icon"><use href="#hole"/></svg></button>
    <button class="tool" aria-label="凸起"><svg class="icon"><use href="#emboss"/></svg></button>
    <button class="overflow overflow-spaced" aria-label="更多"><svg viewBox="0 0 8 7"><path d="M1 0l2.500 3L1 6M4.500 0L7 3 4.500 6"/></svg><i class="caret"></i></button>
  </div>
  <div class="toolgroup"><span class="grip"></span>
    <button class="tool" aria-label="直线"><svg class="icon"><use href="#line"/></svg></button>
    <button class="tool" aria-label="圆弧"><svg class="icon"><use href="#arc"/></svg></button>
    <button class="tool" aria-label="直线和圆弧"><svg class="icon"><use href="#circ"/></svg></button>
    <span class="sep"></span>
    <button class="tool" aria-label="偏置曲线"><svg class="icon"><use href="#offset"/></svg></button>
    <button class="tool" aria-label="样条"><svg class="icon"><use href="#spline"/></svg></button>
    <button class="drop" aria-label="样条选项"><i class="caret"></i></button>
    <button class="tool" aria-label="投影曲线"><svg class="icon"><use href="#proj"/></svg></button>
    <button class="drop" aria-label="投影选项"><i class="caret"></i></button>
    <button class="drop drop-low" aria-label="选项"><i class="caret"></i></button>
  </div>
  <div class="toolgroup toolgroup-last"><span class="grip"></span>
    <button class="tool" aria-label="直纹"><svg class="icon"><use href="#surfa"/></svg></button>
    <button class="tool" aria-label="通过曲线网格"><svg class="icon"><use href="#surfb"/></svg></button>
    <button class="tool" aria-label="通过曲线组"><svg class="icon"><use href="#surfc"/></svg></button>
    <button class="tool" aria-label="剖切曲面"><svg class="icon"><use href="#surfd"/></svg></button>
    <button class="tool" aria-label="N 边曲面"><svg class="icon"><use href="#surfe"/></svg></button>
    <span class="sep"></span>
    <button class="tool" aria-label="桥接"><svg class="icon"><use href="#surff"/></svg></button>
    <button class="tool" aria-label="规律延伸"><svg class="icon"><use href="#surfg"/></svg></button>
    <button class="tool" aria-label="偏置曲面"><svg class="icon"><use href="#surfh"/></svg></button>
    <button class="tool" aria-label="加厚"><svg class="icon"><use href="#surfi"/></svg></button>
    <span class="sep"></span>
    <button class="tool" aria-label="修剪片体"><svg class="icon"><use href="#surfj"/></svg></button>
    <button class="tool" aria-label="扩大"><svg class="icon"><use href="#surfk"/></svg></button>
    <button class="drop drop-low" aria-label="选项"><i class="caret"></i></button>
  </div>
</div>

<div class="selectbar">
  <div class="combo">
    <select aria-label="选择过滤器"><option>没有选择过滤器</option></select>
    <span class="combo-arrow"><i class="caret caret-big"></i></span>
  </div>
  <div class="select-tools">
    <button class="mini" aria-label="捕捉过滤"><svg class="icon-md"><use href="#filt"/></svg></button>
    <i class="caret"></i>
    <button class="mini mini-wide" aria-label="返回"><svg class="icon-sm"><use href="#back"/></svg></button>
    <button class="mini mini-on" aria-label="实体"><svg class="icon-md"><use href="#solid"/></svg></button>
    <button class="mini" aria-label="点"><svg class="icon-sm"><use href="#ga"/></svg></button>
    <button class="mini" aria-label="链"><svg class="icon-sm"><use href="#gbk"/></svg></button>
  </div>
  <button class="drop drop-low select-more" aria-label="选项"><i class="caret"></i></button>
</div>

<div class="statusbar">
  <span class="status-cell"></span><output class="status-cell status-text">部件文件已保存</output><span class="status-cell"></span><span class="status-cell"></span>
</div>
<div class="rail">
  <div class="slider"><button class="slide-btn" aria-label="向左"><svg viewBox="0 0 20 20"><path d="M13 5l-7 5 7 5"/></svg></button><span class="slide-track"></span><button class="slide-btn" aria-label="向右"><svg viewBox="0 0 20 20"><path d="M7 5l7 5-7 5"/></svg></button></div>
</div>

<main class="work">
  <aside class="resource">
    <div class="tabs"><button class="tab" aria-label="装配导航器"><svg class="icon"><use href="#nav"/></svg></button><button class="tab" aria-label="部件导航器"><svg class="icon"><use href="#nav2"/></svg></button></div>
    <div class="tabs"><button class="tab" aria-label="浏览器"><svg class="icon"><use href="#web"/></svg></button></div>
    <div class="tabs"><button class="tab" aria-label="历史"><svg class="icon"><use href="#clock"/></svg></button><button class="tab" aria-label="系统材料"><svg class="icon"><use href="#roles"/></svg></button><button class="tab" aria-label="可视化"><svg class="icon"><use href="#spect"/></svg></button><button class="tab" aria-label="向导"><svg class="icon"><use href="#wand"/></svg></button><button class="tab" aria-label="角色"><svg class="icon"><use href="#people"/></svg></button><button class="tab" aria-label="场景"><svg class="icon"><use href="#pic"/></svg></button></div>
  </aside>
  <div class="splitter"></div>
  <div class="viewport">
    <svg class="scene" viewBox="44 190 1234 578" role="img" aria-label="齿轮泵模型">
      <defs>
        <linearGradient id="body" gradientUnits="userSpaceOnUse" x1="370" y1="480" x2="520" y2="630"><stop offset="0" stop-color="#696969"/><stop offset=".45" stop-color="#505050"/><stop offset="1" stop-color="#2e2e2e"/></linearGradient>
        <linearGradient id="bore" gradientUnits="userSpaceOnUse" x1="446" y1="450" x2="660" y2="600"><stop offset="0" stop-color="#ececec"/><stop offset=".3" stop-color="#c4c4c4"/><stop offset=".42" stop-color="#dedede"/><stop offset=".8" stop-color="#a0a0a0"/><stop offset="1" stop-color="#c8c8c8"/></linearGradient>
        <linearGradient id="side" x1="0" y1="0" x2="1" y2="1"><stop offset="0" stop-color="#6c4500"/><stop offset="1" stop-color="#442900"/></linearGradient>
        <clipPath id="boreclip"><path d="M430 370l63 10 95 180 104 6-20 80H430z"/></clipPath>
      </defs>
      <path d="M356 437L344 457A196 150 43 0 0 323 522C322 650 450 744 543 743C585 743 620 728 642 703L715 624 429 358z" fill="url(#body)" stroke="#2a2a2a" stroke-width="1.200"/>
      <ellipse cx="572" cy="491" rx="196" ry="150" transform="rotate(43 572 491)" fill="#eee" stroke="#282828" stroke-width="1.500"/>
      <g clip-path="url(#boreclip)"><ellipse cx="572" cy="491" rx="140" ry="108" transform="rotate(43 572 491)" fill="url(#bore)" stroke="#222" stroke-width="1.500"/></g>
      <g transform="translate(310 300) scale(.33333)" stroke="#241a08" stroke-width="4" stroke-linejoin="round">
        <path d="M705 128C640 138 605 160 582 190L605 215C615 240 610 255 600 270C585 285 570 280 555 272L525 258C505 300 492 350 490 398L530 408C552 425 555 450 552 478L540 486 503 492C515 540 540 600 570 643L615 636C650 645 665 680 660 710L650 728C690 765 745 805 803 824L806 795C815 780 830 778 850 783L875 795C885 815 885 835 888 853C940 860 995 858 1040 850L1030 800C1035 780 1050 768 1075 770C1095 772 1110 790 1132 808C1170 775 1200 735 1213 705L1185 685C1165 675 1163 660 1165 650C1170 620 1180 608 1195 608L1237 617C1240 560 1232 500 1217 460L1165 455C1145 440 1135 420 1133 400C1135 388 1140 382 1150 380L1170 365C1135 315 1100 270 1052 232L1030 250C1020 262 1000 262 985 250L962 235C955 215 955 200 962 172C910 148 855 130 800 124L785 183H745C720 165 720 140 705 128z" fill="#eeaa22"/>
        <g fill="url(#side)">
          <path d="M525 258C470 300 440 360 423 430L448 412 490 398C492 350 505 300 525 258z"/>
          <path d="M500 492C470 540 450 590 443 635L470 682 565 655 570 643C540 600 515 540 503 492z"/>
          <path d="M888 853C940 860 995 858 1040 850C1010 885 970 910 920 937H875z"/>
          <path d="M650 728C690 765 745 805 803 824C760 850 710 870 665 880L617 850C610 810 615 760 650 728z"/>
          <path d="M806 795C815 780 830 778 850 783L875 795C885 815 890 840 888 858L875 937C840 895 828 850 830 812z"/>
        </g>
        <g fill="#3b2500">
          <path d="M800 124L777 183H790L803 160z"/>
          <path d="M582 190L545 230 540 250C555 270 575 285 600 270C615 250 612 225 582 190z"/>
          <path d="M423 432L490 398 530 408C552 425 555 450 552 478C500 475 460 460 423 432z"/>
          <path d="M470 682L565 650 615 636C650 645 665 680 660 710L645 718C640 690 625 668 600 665L560 680z"/>
          <path d="M1040 848L1030 800C1035 780 1050 768 1075 770C1095 772 1110 790 1132 808L1085 858z"/>
          <path d="M1237 617L1195 608C1180 608 1170 620 1165 655z"/>
        </g>
        <path d="M603 668C625 668 640 690 646 714zM806 812l4-18c14-2 20 8 18 18z" fill="#fff" stroke="none"/>
        <path d="M500 290C470 330 455 370 450 412M470 560L515 660M520 410L530 470M625 785L725 855M885 898L975 902M530 410c14 15 14 40 12 65M600 670l48 50M806 812l75 10" fill="none" stroke="#333" stroke-width="3"/>
        <path d="M572 805L640 730M572 805L668 734" fill="none" stroke="#fffbe8" stroke-width="4"/>
      </g>
      <g class="axis-note"><text x="450" y="513">XC</text><text x="533" y="534">XO'C</text></g>
      <g class="triad" fill="none" stroke-width="1.600">
        <path d="M127 685L100 654" stroke="#0a0ac0"/><path d="M127 685L154 663" stroke="#20e010"/><path d="M127 685L146 665" stroke="#d01010"/>
        <circle cx="127" cy="685" r="5" fill="#999" stroke="none"/>
        <text class="z" x="86" y="650">Z</text><text class="x" x="147" y="664">X</text><text class="y" x="158" y="664">Y</text>
      </g>
    </svg>
  </div>
</main>
<div class="hairline"></div>

<footer class="taskbar">
  <button class="start"><svg class="icon-lg"><use href="#winflag"/></svg><span>开始</span></button>
  <div class="quick">
    <button class="quick-btn" aria-label="画图"><svg class="icon-sm"><use href="#brushes"/></svg></button>
    <button class="quick-btn" aria-label="启动"><svg class="icon-sm"><use href="#anchor"/></svg></button>
    <button class="quick-btn" aria-label="显示桌面"><svg class="icon-sm"><use href="#desk"/></svg></button>
  </div>
  <div class="tasks">
    <button class="task task-flash"><svg class="icon-sm"><use href="#ie"/></svg><span class="latin">http://www...</span></button>
    <button class="task"><svg class="icon-sm"><use href="#folder"/></svg><span class="latin">0</span></button>
    <button class="task"><svg class="icon-sm"><use href="#ie"/></svg><span>中国齿轮论<span class="latin">...</span></span></button>
    <button class="task"><svg class="icon-sm"><use href="#ie"/></svg><span>参与<span class="latin">/</span>回复<span class="latin">...</span></span></button>
    <button class="task"><svg class="icon-sm"><use href="#note"/></svg><span>上海行星厂<span class="latin">...</span></span></button>
    <button class="task"><svg class="icon-sm"><use href="#disk"/></svg><span>可移动磁盘<span class="latin">...</span></span></button>
    <button class="task task-on"><svg class="icon-sm"><use href="#nx"/></svg><span class="latin">NX 5 - Mode...</span></button>
  </div>
  <div class="tray">
    <button class="tray-toggle" aria-label="显示隐藏的图标"><svg viewBox="0 0 16 16"><path d="M10 4L6 8l4 4"/></svg></button>
    <svg class="icon-sm"><use href="#net"/></svg><svg class="icon-sm"><use href="#wifi"/></svg><svg class="icon-sm"><use href="#net"/></svg><svg class="icon-sm"><use href="#qq"/></svg><svg class="icon-sm"><use href="#shield"/></svg>
    <time class="clock">20:42</time>
  </div>
</footer>

<form class="search" onsubmit="return false">
  <div class="search-top">
    <svg class="search-shape" viewBox="0 0 140 20" preserveAspectRatio="none"><path d="M0 20V3q0-3 3-3h119c10 0 8 20 18 20z"/></svg>
    <input class="search-field" type="text" aria-label="搜索内容">
    <button class="pill pill-wide"><svg class="icon-sm" viewBox="0 0 16 16"><circle cx="10" cy="6" r="4.500" fill="#e8f8ff" stroke="#2a82c8" stroke-width="2"/><path d="M6 10l-5 5" stroke="#2a82c8" stroke-width="2.500"/></svg>搜 索</button>
    <button class="pill">网址</button>
    <button class="pill pill-round">词</button>
    <button class="pill pill-round" aria-label="关闭"><svg viewBox="0 0 10 10"><path d="M1 1l8 8M9 1L1 9" stroke="#17629a" stroke-width="2.500"/></svg></button>
  </div>
  <div class="search-bottom"><button class="pill pill-expand" aria-label="展开"><svg viewBox="0 0 12 12" fill="none" stroke="#17629a"><path d="M4 3V1h7v7H9M1 3h8v8H1zM3 5l4 4M3 8V5h3"/></svg></button></div>
</form>
</body>
</html>
```
FILE: styles.css
```css
* { box-sizing: border-box; }
body {
  margin: 0;
  min-height: 100vh;
  display: flex;
  flex-direction: column;
  position: relative;
  overflow-x: hidden;
  background: #d8d8d8;
  color: #000;
  font: 12px/16px "Noto Sans CJK SC", sans-serif;
}
button, select, input { font: inherit; color: inherit; margin: 0; }
button {
  display: flex;
  align-items: center;
  justify-content: center;
  flex: none;
  padding: 0;
  border: 0;
  background: none;
  white-space: nowrap;
}
svg { display: block; flex: none; }
.sprite { position: absolute; width: 0; height: 0; }
.icon { width: 24px; height: 24px; }
.icon-lg { width: 20px; height: 20px; }
.icon-md { width: 18px; height: 18px; }
.icon-sm { width: 16px; height: 16px; }

.titlebar {
  display: flex;
  align-items: center;
  height: 26px;
  padding: 0 2px;
  gap: 4px;
  background: linear-gradient(#2a80f0 0, #0058e6 12%, #0050e0 45%, #0064fa 80%, #0050d8 100%);
}
.title {
  flex: 1;
  margin: 0;
  color: #fff;
  font: bold 13px/20px "Liberation Mono", monospace;
  text-shadow: 1px 1px #0a2a80;
  white-space: nowrap;
}
.win-buttons { display: flex; gap: 2px; }
.win-btn {
  width: 21px;
  height: 21px;
  border: 1px solid #fff;
  border-radius: 3px;
  background: linear-gradient(135deg, #7aa4f4, #2458dc 50%, #1c48c0);
}
.win-btn svg { width: 19px; height: 19px; fill: none; stroke: #fff; }
.win-close { background: linear-gradient(135deg, #f0a088, #e0502c 50%, #c03c14); }

.menubar {
  display: flex;
  align-items: center;
  height: 27px;
  padding-right: 5px;
  background: linear-gradient(90deg, #e4e4e4, #dedede);
  border-bottom: 1px solid #b4b4b4;
}
.menus { display: flex; flex: 1; gap: 11px; padding-left: 5px; }
.menu { line-height: 20px; }
.mdi-buttons { display: flex; gap: 2px; }
.mdi-btn {
  width: 17px;
  height: 17px;
  border: 1px solid #6c6c6c;
  border-radius: 3px;
  background: #f4f4f4;
}
.mdi-btn svg { width: 15px; height: 15px; fill: none; stroke: #555; }

.grip {
  flex: none;
  width: 3px;
  height: 24px;
  margin: 0 1px 0 4px;
  background: repeating-linear-gradient(#999 0 2px, #eee 2px 4px);
}
.toolrow {
  display: flex;
  height: 34px;
  background: linear-gradient(#dedede, #cecece);
}
.toolrow-bordered { border-bottom: 1px solid #aaa; box-shadow: 0 1px #f0f0f0; }
.toolgroup {
  display: flex;
  align-items: center;
  flex: none;
  padding-right: 1px;
  border-right: 1px solid #b0b0b0;
}
.toolgroup + .toolgroup { box-shadow: inset 1px 0 #f4f4f4; }
.toolgroup-last { padding-right: 0; border-right: 0; }
.tool { width: 31px; height: 30px; }
.tool-on { border: 1px solid #444; border-radius: 3px; background: #fff; }
.start-app {
  width: 67px;
  height: 28px;
  gap: 3px;
  border: 1px solid #aaa;
  border-radius: 2px;
  background: #e0e0e0;
}
.sep {
  width: 2px;
  height: 30px;
  margin: 0 2px;
  border-left: 1px solid #b0b0b0;
  border-right: 1px solid #f0f0f0;
}
.drop { width: 12px; height: 30px; }
.drop-low { align-items: flex-end; padding-bottom: 4px; }
.caret {
  width: 0;
  height: 0;
  border: 3px solid transparent;
  border-top-color: #000;
  border-bottom: 0;
}
.caret-big { border-width: 6px; border-bottom: 0; }
.overflow {
  flex-direction: column;
  justify-content: space-between;
  width: 12px;
  height: 23px;
}
.overflow svg { width: 8px; height: 7px; fill: none; stroke: #000; stroke-width: 1.3; }
.overflow-spaced { margin: 0 3px 0 14px; }

.selectbar {
  display: flex;
  align-items: center;
  height: 31px;
  padding: 0 3px 0 5px;
  background: linear-gradient(#dadada, #c6c6c6);
  border-top: 1px solid #a8a8a8;
}
.combo { position: relative; width: 143px; }
.combo select {
  display: block;
  width: 100%;
  height: 21px;
  padding: 0 0 0 1px;
  appearance: none;
  border: 1px solid #6a7078;
  border-radius: 3px;
  background: #fff;
  line-height: 18px;
}
.combo-arrow {
  position: absolute;
  right: 1px;
  top: 1px;
  bottom: 1px;
  width: 17px;
  display: flex;
  align-items: center;
  justify-content: center;
  background: linear-gradient(#e4f2fc, #5c98d8);
  pointer-events: none;
}
.select-tools { display: flex; align-items: center; flex: 1; padding-left: 4px; }
.mini { width: 23px; height: 22px; }
.mini-wide { width: 26px; }
.mini-on { border: 1px solid #444; border-radius: 3px; background: #fff; }
.select-more { height: 28px; }

.statusbar {
  display: grid;
  grid-template-columns: 611fr 611fr 21px 37px;
  height: 22px;
  background: #d8d8d8;
  border-top: 1px solid #f4f4f4;
}
.status-cell { border-right: 1px solid #b8b8b8; box-shadow: 1px 0 #f0f0f0; }
.status-text { padding-left: 3px; font-size: 13px; line-height: 18px; font-weight: bold; }
.rail {
  position: relative;
  height: 16px;
  background: linear-gradient(#888 0 1px, #bcbcbc 1px 6px, #f4f4f4 6px 8px, #dcdcdc 8px 13px, #888 13px 14px, #6e6e60 14px 16px);
}
.slider {
  position: absolute;
  z-index: 1;
  left: 0;
  top: 0;
  display: flex;
  width: 118px;
  height: 22px;
  border: 1px solid #555;
  background: #05070c;
}
.slide-track { flex: 1; background: linear-gradient(#48546c, #202a44 45%, #020306 55%); }
.slide-btn { width: 21px; background: #eee; }
.slide-btn svg { width: 20px; height: 20px; fill: none; stroke: #555; stroke-width: 2; }

.work { display: flex; flex: 1; min-height: 578px; padding-right: 2px; background: #e8e8e8; }
.resource {
  display: flex;
  flex-direction: column;
  gap: 14px;
  width: 33px;
  padding: 15px 0 0 6px;
  background: linear-gradient(90deg, #aaa, #b8b8b8);
}
.tabs { display: flex; flex-direction: column; gap: 2px; }
.tab {
  width: 27px;
  height: 40px;
  border: 1px solid #777;
  border-right: 0;
  background: #dcdcdc;
  box-shadow: inset 1px 1px #f4f4f4;
}
.splitter { width: 11px; background: #ececea; border: solid #666; border-width: 0 1px; }
.viewport {
  position: relative;
  flex: 1;
  background: linear-gradient(#98bedd 0, #a9c8e1 20%, #c6d6e2 50%, #e5e5e5 75%, #e6e6e6);
}
.scene { position: absolute; inset: 0; width: 100%; height: 100%; }
.axis-note { fill: #e0d0a0; font: 13px "Liberation Sans", sans-serif; }
.triad text { stroke: none; font: 12px "Liberation Sans", sans-serif; }
.triad .x { fill: #e02020; }
.triad .y { fill: #20d820; }
.triad .z { fill: #1010c0; }
.hairline { height: 2px; background: #eee; }
.hairline::after {
  content: "";
  display: block;
  width: 480px;
  height: 2px;
  margin-left: 265px;
  border-top: 1px solid #eee;
  background: #000;
}

.taskbar {
  display: flex;
  height: 30px;
  color: #fff;
  background: linear-gradient(#1c4cb8 0, #4a8cf0 8%, #2a66e0 20%, #245cdc 80%, #1a44b0 100%);
}
.start {
  width: 97px;
  gap: 6px;
  padding-right: 12px;
  border-radius: 0 10px 12px 0;
  background: linear-gradient(#2c7a2c, #58b058 12%, #3a9a3a 30%, #389838 75%, #256a25);
  font-size: 19px;
  font-style: italic;
  line-height: 26px;
  text-shadow: 1px 1px #1a4a1a;
}
.quick { display: flex; align-items: center; gap: 7px; width: 85px; padding-left: 12px; }
.tasks { display: flex; flex: 1; gap: 2px; padding: 3px 0 2px; min-width: 0; }
.task {
  flex: 0 1 125px;
  justify-content: flex-start;
  gap: 4px;
  min-width: 0;
  padding-left: 8px;
  overflow: hidden;
  border-radius: 3px;
  background: linear-gradient(#6aa0fa, #3c80f2 20%, #3878ee 85%, #2a60d0);
}
.task-flash { background: linear-gradient(#8cc0ff, #5ea0f8 20%, #5498f6 85%, #3c78dc); }
.task-on { background: linear-gradient(#123c90, #1c4cb0 20%, #1e50b8); }
.latin { font-family: "Liberation Mono", monospace; font-size: 10px; }
.tray {
  display: flex;
  align-items: center;
  gap: 2px;
  width: 156px;
  flex: none;
  background: linear-gradient(90deg, transparent 7px, #0c3c90 7px 8px, transparent 8px), linear-gradient(90deg, #245cdc 8px, transparent 8px), linear-gradient(#1470c8, #30a8f8 12%, #1490ea 30%, #1290ea 80%, #0c60b8);
}
.tray-toggle { width: 16px; height: 16px; border-radius: 8px; background: radial-gradient(circle at 5px 5px, #80c0ff, #1058c8); }
.tray-toggle svg { width: 16px; height: 16px; fill: none; stroke: #fff; stroke-width: 2; }
.clock { padding-left: 5px; font: 10px/16px "Liberation Mono", monospace; }

.search {
  position: absolute;
  left: 678px;
  top: 5px;
  width: 302px;
  height: 49px;
  padding: 2px;
  border: 1px solid #58a8d8;
  background: linear-gradient(#c4e8fc, #98d4f8 40%, #bce4fa);
  color: #17629a;
}
.search-top { position: relative; display: flex; align-items: center; height: 20px; }
.search-shape { position: absolute; left: 0; top: 0; width: 140px; height: 20px; fill: #f7f9fb; stroke: #80c4e8; }
.search-field { position: relative; width: 146px; height: 18px; padding: 0 8px; border: 0; background: none; outline: 0; }
.pill {
  height: 16px;
  padding: 0 6px;
  border: 1px solid #88c4e8;
  border-radius: 8px;
  background: linear-gradient(#f0faff, #a8dcf8);
  line-height: 14px;
}
.pill-wide { width: 68px; gap: 4px; margin-right: 8px; }
.pill-round { min-width: 18px; padding: 0 2px; }
.pill-round svg { width: 9px; height: 9px; }
.search-bottom {
  display: flex;
  align-items: center;
  justify-content: flex-end;
  height: 23px;
  padding-right: 24px;
  border: 1px solid #88c8e8;
  background: #f6f8fa;
}
.pill-expand { width: 20px; height: 20px; padding: 0; border-radius: 10px; border-color: #3c94c8; }
.pill-expand svg { width: 12px; height: 12px; }
```
